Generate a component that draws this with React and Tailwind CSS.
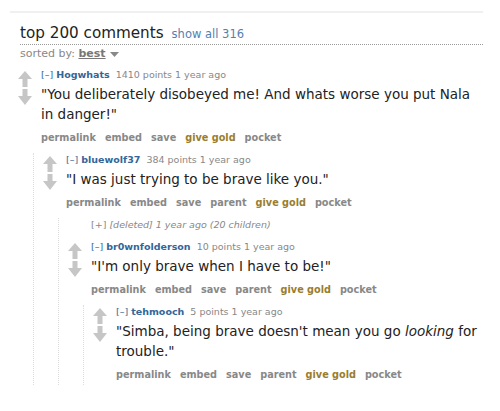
import React from "react";

const Arrows = () => (
  <svg width="14" height="34" viewBox="0 0 14 34" className="block">
    <path d="M7 0L14 8H9.5V16H4.5V8H0Z" fill="#c6c6c6" />
    <path d="M4.5 18H9.5V25H14L7 34L0 25H4.5Z" fill="#c6c6c6" />
  </svg>
);

function Buttons({ parent, leaf }) {
  return (
    <ul
      className={`mt-[7px] flex gap-[9px] text-[9.7px] leading-[14px] font-bold text-[#888] ${
        leaf ? "mb-[3px]" : ""
      }`}
    >
      <li>permalink</li>
      <li>embed</li>
      <li>save</li>
      {parent && <li>parent</li>}
      <li className="text-[#9a7d2e]">give gold</li>
      <li>pocket</li>
    </ul>
  );
}

function Comment({ author, points, body, parent, leaf, children }) {
  return (
    <div>
      <div className="flex">
        <div className="w-[14px] shrink-0 pt-[3px]">
          <Arrows />
        </div>
        <div className="ml-[9px] min-w-0 flex-1">
          <p className="text-[9.5px] leading-[14px] text-[#888]">
            <span className="text-[#369]">[–]</span>{" "}
            <span className="font-bold text-[#369]">{author}</span>
            <span className="ml-[6px]">{points} points 1 year ago</span>
          </p>
          <div className="mt-[2px] text-[13.5px] leading-[20px] text-[#222]">{body}</div>
          <Buttons parent={parent} leaf={leaf} />
        </div>
      </div>
      {children && (
        <div className="mt-[8px] ml-[15px] flex flex-col gap-[8px] border-l border-dotted border-[#ddd] pl-[9px]">
          {children}
        </div>
      )}
    </div>
  );
}

function Deleted() {
  return (
    <div className="flex">
      <div className="w-[14px] shrink-0" />
      <p className="ml-[9px] text-[9.5px] leading-[14px] text-[#888]">
        [+] <em>[deleted] 1 year ago (20 children)</em>
      </p>
    </div>
  );
}

export default function App() {
  return (
    <div
      className="min-h-screen bg-white"
      style={{ fontFamily: '"DejaVu Sans", Verdana, sans-serif' }}
    >
      <div className="ml-[10px] mr-[17px] pt-[11px]">
        <div className="h-[2px] bg-[#f0f0f0]" />
      </div>

      {/* header */}
      <div className="ml-[20px] mr-[17px] mt-[10px]">
        <div className="flex items-baseline border-b border-dotted border-[#999] pb-[1px]">
          <h2 className="text-[15.2px] leading-[20px] font-normal text-[#222]">top 200 comments</h2>
          <span className="ml-[8px] text-[11.5px] text-[#5580b0]">show all 316</span>
        </div>
        <div className="flex items-center pt-[2px] text-[11px] leading-[14px] text-[#888]">
          <span>sorted by:&nbsp;</span>
          <span className="font-bold text-[#777] underline">best</span>
          <svg width="9" height="5" viewBox="0 0 9 5" className="ml-[4px] mt-[1px]">
            <path d="M0 0H9L4.5 5Z" fill="#888" />
          </svg>
        </div>
      </div>

      {/* comments */}
      <div className="ml-[18px] mr-[18px] mt-[7px]">
        <Comment
          author="Hogwhats"
          points="1410"
          body={<p>"You deliberately disobeyed me! And whats worse you put Nala in danger!"</p>}
        >
          <Comment
            author="bluewolf37"
            points="384"
            parent
            body={<p>"I was just trying to be brave like you."</p>}
          >
            <Deleted />
            <Comment
              author="br0wnfolderson"
              points="10"
              parent
              body={<p>"I'm only brave when I have to be!"</p>}
            >
              <Comment
                author="tehmooch"
                points="5"
                parent
                leaf
                body={
                  <p>
                    "Simba, being brave doesn't mean you go <em>looking</em> for trouble."
                  </p>
                }
              />
            </Comment>
          </Comment>
        </Comment>
      </div>
    </div>
  );
}
